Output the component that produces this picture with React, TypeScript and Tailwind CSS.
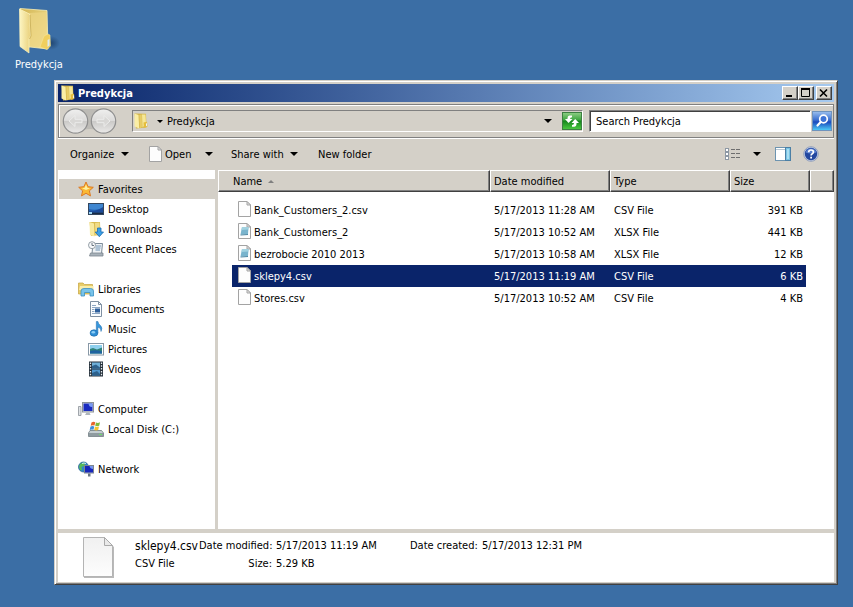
import type { ReactNode } from 'react';

type IconProps = { className?: string };

interface FileEntry {
  name: string;
  modified: string;
  type: string;
  size: string;
  kind: 'blank' | 'sheet';
}

interface NavItem {
  label: string;
  icon: (props: IconProps) => ReactNode;
}

interface NavGroup extends NavItem {
  active?: boolean;
  children: NavItem[];
}

const FILES: FileEntry[] = [
  { name: 'Bank_Customers_2.csv', modified: '5/17/2013 11:28 AM', type: 'CSV File', size: '391 KB', kind: 'blank' },
  { name: 'Bank_Customers_2', modified: '5/17/2013 10:52 AM', type: 'XLSX File', size: '441 KB', kind: 'sheet' },
  { name: 'bezrobocie 2010 2013', modified: '5/17/2013 10:58 AM', type: 'XLSX File', size: '12 KB', kind: 'sheet' },
  { name: 'sklepy4.csv', modified: '5/17/2013 11:19 AM', type: 'CSV File', size: '6 KB', kind: 'blank' },
  { name: 'Stores.csv', modified: '5/17/2013 10:52 AM', type: 'CSV File', size: '4 KB', kind: 'blank' },
];

const SELECTED = 'sklepy4.csv';

const NAV: NavGroup[] = [
  {
    label: 'Favorites',
    icon: StarIcon,
    active: true,
    children: [
      { label: 'Desktop', icon: DesktopIcon },
      { label: 'Downloads', icon: DownloadsIcon },
      { label: 'Recent Places', icon: RecentIcon },
    ],
  },
  {
    label: 'Libraries',
    icon: LibrariesIcon,
    children: [
      { label: 'Documents', icon: DocumentsIcon },
      { label: 'Music', icon: MusicIcon },
      { label: 'Pictures', icon: PicturesIcon },
      { label: 'Videos', icon: VideosIcon },
    ],
  },
  { label: 'Computer', icon: ComputerIcon, children: [{ label: 'Local Disk (C:)', icon: DiskIcon }] },
  { label: 'Network', icon: NetworkIcon, children: [] },
];

/* Icons */

function BigFolderIcon() {
  return (
    <svg viewBox="0 0 42 48" className="h-12 w-[42px]">
      <defs>
        <linearGradient id="bf-back" x1="0" y1="0" x2="1" y2="1">
          <stop offset="0" stopColor="#d2b452" />
          <stop offset="1" stopColor="#f8e9a0" />
        </linearGradient>
        <linearGradient id="bf-front" x1="0" y1="0" x2="1" y2="0">
          <stop offset="0" stopColor="#fdf6c4" />
          <stop offset="1" stopColor="#e9d07a" />
        </linearGradient>
        <radialGradient id="bf-shadow">
          <stop offset="0" stopColor="#16365c" stopOpacity="0.7" />
          <stop offset="1" stopColor="#16365c" stopOpacity="0" />
        </radialGradient>
      </defs>
      <ellipse cx="33" cy="35" rx="9" ry="7" fill="url(#bf-shadow)" />
      <path d="M2 0.500 L29 2.500 L30 41 L12 39 L5 40 Z" fill="url(#bf-back)" stroke="#f8eeb4" strokeWidth="0.8" />
      <path d="M11 5 L28 4 L28.500 40 L11.500 38 Z" fill="#ecd684" opacity="0.7" />
      <path d="M26 28 L30 26 L32 27 L32.500 38 L29 41.500 L22 39 Z" fill="#f0cf5e" stroke="#f9e89c" strokeWidth="0.5" />
      <path d="M29.500 32 L31.500 31 L31.500 37.500 L29.500 39 Z" fill="#dceaf0" />
      <path d="M1.500 1 L11.500 6 L12.500 28 L11 31 L11 45 L2 38.500 Z" fill="url(#bf-front)" stroke="#fbf3c0" strokeWidth="0.7" />
      <path d="M12 7 L13 28 L11.500 31" fill="none" stroke="#b99a3c" strokeWidth="0.6" />
    </svg>
  );
}

function FolderIcon({ className = 'size-4' }: IconProps) {
  return (
    <svg viewBox="0 0 16 16" className={className}>
      <path d="M1.500 0.500 L13 0.800 L13.500 14.500 L3 15.500 Z" fill="#d5b64a" />
      <path d="M1.500 0.500 L5.500 2 L6.200 15.500 L1.500 13.500 Z" fill="#faeea6" />
      <path d="M6.300 2 L8.800 1.500 L9 14 L6.800 15.500 Z" fill="#e7cc67" />
      <path d="M9 1.500 L12.500 1.500 L13 11 L9.500 14.500 Z" fill="#f6e796" />
      <path d="M10.500 9.500 L14 8.800 L14.500 13.500 L11 14.800 Z" fill="#e5bd3c" />
      <path d="M13 10.500 L14 10.200 V12.800 L13 13.200 Z" fill="#eef4f4" />
    </svg>
  );
}

function PageIcon({ className = 'size-4' }: IconProps) {
  return (
    <svg viewBox="0 0 16 16" className={className}>
      <path d="M0.500 0.500 H9 L12.500 4 V15.500 H0.500 Z" fill="#fdfdfd" stroke="#a3a3a3" />
      <path d="M9 0.500 V4 H12.500 Z" fill="#e3e3e3" stroke="#a3a3a3" />
    </svg>
  );
}

function SheetIcon({ className = 'size-4' }: IconProps) {
  return (
    <svg viewBox="0 0 16 16" className={className}>
      <path d="M0.500 0.500 H9 L12.500 4 V15.500 H0.500 Z" fill="#fdfdfd" stroke="#a3a3a3" />
      <path d="M9 0.500 V4 H12.500 Z" fill="#e3e3e3" stroke="#a3a3a3" />
      <path d="M4 4 L10.500 4 L10 11 L2.500 11.500 Z" fill="#79b4cd" />
      <path d="M4 4 L10.500 4 L10.300 6.500 L3.500 7 Z" fill="#a2d2e0" />
      <path d="M2.500 11.500 L10 11 L10 12 L2.500 12.500 Z" fill="#4a86a3" />
    </svg>
  );
}

function BigPageIcon() {
  return (
    <svg viewBox="0 0 34 42" className="h-[42px] w-[34px]">
      <defs>
        <linearGradient id="bp" x1="0" y1="0" x2="0" y2="1">
          <stop offset="0" stopColor="#f0f0f0" />
          <stop offset="1" stopColor="#fdfdfd" />
        </linearGradient>
      </defs>
      <path d="M2 2 H24 L32 10 V41 H2 Z" fill="#b9b9b9" />
      <path d="M1.500 0.500 H22.500 L30.500 8.500 V39.500 H1.500 Z" fill="url(#bp)" stroke="#b4b4b4" />
      <path d="M22.500 0.500 V8.500 H30.500 Z" fill="#e9e9e9" stroke="#a9a9a9" />
    </svg>
  );
}

function StarIcon({ className }: IconProps) {
  return (
    <svg viewBox="0 0 16 16" className={className}>
      <path
        d="M8 1 L10.100 5.700 L15.300 6.300 L11.400 9.800 L12.500 14.900 L8 12.300 L3.500 14.900 L4.600 9.800 L0.700 6.300 L5.900 5.700 Z"
        fill="#fbb934"
        stroke="#dd7a24"
        strokeLinejoin="round"
      />
      <path d="M8 3.500 L9.300 6.800 L12 7.200 L8 9 L4 7.200 L6.700 6.800 Z" fill="#fff0a0" />
    </svg>
  );
}

function DesktopIcon({ className }: IconProps) {
  return (
    <svg viewBox="0 0 16 16" className={className}>
      <rect x="0.500" y="2.500" width="15" height="11" fill="#2360b0" stroke="#33475f" />
      <path d="M1 3 H15 V7 Q8 10 1 8 Z" fill="#3f86d0" />
      <path d="M1 10 Q8 11 15 6 V11 H1 Z" fill="#1c4b9a" />
      <rect x="1" y="11.500" width="14" height="1.500" fill="#1a2a44" />
      <rect x="1" y="11" width="3" height="2" fill="#9fd7f5" />
    </svg>
  );
}

function DownloadsIcon({ className }: IconProps) {
  return (
    <svg viewBox="0 0 16 16" className={className}>
      <path d="M1.500 1 L12 1 L12.500 14 L3 15 Z" fill="#d9bb50" />
      <path d="M1.500 1 L6 2.500 L6.500 15.500 L2 14 Z" fill="#f8eaa0" />
      <path d="M7 2 L11.500 1.500 L12 12 L7.500 14 Z" fill="#f1dc86" />
      <path d="M9.500 7 H13 V11 H15.500 L11.300 15.700 L7.200 11 H9.500 Z" fill="#3ba0e6" stroke="#1d6cae" strokeWidth="0.800" />
    </svg>
  );
}

function RecentIcon({ className }: IconProps) {
  return (
    <svg viewBox="0 0 16 16" className={className}>
      <path d="M5 2.500 H14.500 L13.500 12.500 H4 Z" fill="#eef2f5" stroke="#7d8c99" />
      <path d="M8 5 H13 M7.500 7 H12.500 M7.500 9 H12" stroke="#6f93b5" />
      <path d="M2.500 12 H15 V15 H1.500 Z" fill="#a8b2ba" stroke="#7c868f" strokeWidth="0.800" />
      <circle cx="4" cy="4.200" r="3.500" fill="#f6f8fa" stroke="#8a949c" strokeWidth="0.900" />
      <path d="M4 2 V4.500 H6" stroke="#5d6a75" strokeWidth="0.900" fill="none" />
    </svg>
  );
}

function LibrariesIcon({ className }: IconProps) {
  return (
    <svg viewBox="0 0 16 16" className={className}>
      <path d="M0.500 2 H5 L6.500 3.500 H14.500 V13 H0.500 Z" fill="#e8cd68" stroke="#c4a23d" strokeWidth="0.700" />
      <path d="M2 5 H15.500 V9 H1 Z" fill="#f9edab" />
      <path d="M3 15 V10 Q3 7.500 6 7.500 H12.500 Q15.500 7.500 15.500 10 V15 H12 V11.500 H6.500 V15 Z" fill="#78c3ea" stroke="#3b8fc2" strokeWidth="0.800" />
    </svg>
  );
}

function DocumentsIcon({ className }: IconProps) {
  return (
    <svg viewBox="0 0 16 16" className={className}>
      <path d="M2.500 0.500 H10.500 L13.500 3.500 V15.500 H2.500 Z" fill="#fbfdff" stroke="#7f90a2" />
      <path d="M10.500 0.500 V3.500 H13.500" fill="none" stroke="#7f90a2" />
      <path d="M4 4.500 H8 M4 6.500 H12 M4 8.500 H6.500 M4 10.500 H6.500 M4 12.500 H12" stroke="#8ea8c4" />
      <rect x="7" y="7.500" width="5" height="4" fill="#2d5f9c" />
    </svg>
  );
}

function MusicIcon({ className }: IconProps) {
  return (
    <svg viewBox="0 0 16 16" className={className}>
      <ellipse cx="6" cy="12" rx="3.900" ry="3.200" fill="#2f8fd6" stroke="#1e6bab" strokeWidth="0.700" />
      <ellipse cx="5.300" cy="11.200" rx="1.800" ry="1.200" fill="#8ccdf5" />
      <path d="M8.300 0.500 H9.900 Q10.300 3 12.500 4.500 Q15 6.800 13 10.500 Q13.300 7 9.900 6 V12 H8.300 Z" fill="#3897dc" stroke="#1e6bab" strokeWidth="0.500" />
    </svg>
  );
}

function PicturesIcon({ className }: IconProps) {
  return (
    <svg viewBox="0 0 16 16" className={className}>
      <rect x="0.500" y="2.500" width="15" height="11.500" fill="#fff" stroke="#8898a6" />
      <rect x="2" y="4" width="12" height="8.500" fill="#8fd0ee" />
      <path d="M2 8 L5 7 L9 8.500 L14 6.500 V12.500 H2 Z" fill="#2f8178" />
      <path d="M2 10 Q8 8.500 14 10.500 V12.500 H2 Z" fill="#1f62a0" />
    </svg>
  );
}

function VideosIcon({ className }: IconProps) {
  return (
    <svg viewBox="0 0 16 16" className={className}>
      <rect x="1" y="0.500" width="14" height="15" fill="#26313b" />
      <rect x="4" y="1.500" width="8" height="6" fill="#6fb0d9" />
      <rect x="4" y="8.500" width="8" height="6" fill="#4f97cf" />
      <path d="M4 5 L8 3.500 L12 6.500 V7.500 H4 Z M4 12 L9 10 L12 13 V14.500 H4 Z" fill="#2d618c" />
      <path d="M2.500 1.500 V15 M13.500 1.500 V15" stroke="#e6edf2" strokeWidth="1.300" strokeDasharray="1.500 1.300" />
    </svg>
  );
}

function ComputerIcon({ className }: IconProps) {
  return (
    <svg viewBox="0 0 16 16" className={className}>
      <path d="M0.500 5.500 H3 V14.500 H0.500 Z" fill="#dfe2e5" stroke="#8b9298" strokeWidth="0.800" />
      <rect x="4.500" y="1.500" width="11" height="9.500" fill="#d5dade" stroke="#8b9298" />
      <rect x="5.500" y="2.500" width="9" height="7.500" fill="#1a2bc0" />
      <path d="M10.500 2.500 H14.500 V6 Q11 6.500 10.500 2.500 Z" fill="#7a9cf2" />
      <path d="M8.500 11.500 H11.500 L12.500 14 H7 Z" fill="#aeb5bb" />
    </svg>
  );
}

function DiskIcon({ className }: IconProps) {
  return (
    <svg viewBox="0 0 16 16" className={className}>
      <path d="M2 9.500 H13.500 L15.500 12 V15.500 H0.500 V12 Z" fill="#8f9ba0" stroke="#69757b" strokeWidth="0.700" />
      <path d="M2 10 H13.500 L15 12 H1 Z" fill="#c3cdd0" />
      <rect x="11" y="13" width="3" height="1" fill="#6fe06a" />
      <path d="M3.500 1.500 Q5.500 0.300 7.300 1.300 L6.500 4.600 Q4.500 3.900 2.700 4.800 Z" fill="#e8642c" />
      <path d="M8 1.500 Q10 2.400 12 1.300 L11.200 4.800 Q9.200 5.700 7.200 4.800 Z" fill="#7fba3a" />
      <path d="M2.500 5.500 Q4.400 4.500 6.300 5.400 L5.500 8.800 Q3.600 8 1.700 9 Z" fill="#3d8ddb" />
      <path d="M7 5.600 Q9 6.500 11 5.600 L10.200 9 Q8.200 9.900 6.200 9 Z" fill="#f5c331" />
    </svg>
  );
}

function NetworkIcon({ className }: IconProps) {
  return (
    <svg viewBox="0 0 16 16" className={className}>
      <circle cx="5.500" cy="6" r="5" fill="#2f86c9" stroke="#1d5a8e" strokeWidth="0.700" />
      <path d="M2 3 Q5 0.500 7.500 2 L6 5 L3.500 6 L4 9 L2.500 9.500 Q0 6 2 3 Z" fill="#58b957" />
      <path d="M4 2.500 Q6 1.500 8 2.500" stroke="#cdeefb" fill="none" />
      <rect x="6.500" y="4.500" width="9" height="7.500" fill="#cfd5da" stroke="#7d868e" />
      <rect x="7" y="5" width="8" height="6.500" fill="#1726bb" />
      <path d="M11.500 5 H15 V8 Q12 8 11.500 5 Z" fill="#7595ee" />
      <path d="M10 12.500 H12.500 V15.500 H10 Z" fill="#6b7685" />
    </svg>
  );
}

function RefreshIcon() {
  return (
    <svg viewBox="0 0 20 18" className="h-[18px] w-5">
      <defs>
        <linearGradient id="rf" x1="0" y1="0" x2="0" y2="1">
          <stop offset="0" stopColor="#8fce86" />
          <stop offset="0.450" stopColor="#3aa53d" />
          <stop offset="0.500" stopColor="#16861d" />
          <stop offset="1" stopColor="#4ccb41" />
        </linearGradient>
      </defs>
      <rect x="0.500" y="0.500" width="19" height="17" fill="url(#rf)" stroke="#3c7f42" />
      <path d="M10 3.500 H7.500 Q5.500 3.700 5.500 6 V7 H3 L6.500 11 L10.500 7 H8 Q8 5.500 10 5.300 Z" fill="#fff" />
      <path d="M10 14.800 H12.500 Q14.500 14.600 14.500 12.300 V11 H17 L13.200 7 L9.500 11 H12 Q12 12.800 10 13 Z" fill="#fff" />
    </svg>
  );
}

function SearchIcon() {
  return (
    <svg viewBox="0 0 20 20" className="size-5">
      <defs>
        <linearGradient id="sr" x1="0" y1="0" x2="0" y2="1">
          <stop offset="0" stopColor="#9cc0ee" />
          <stop offset="0.450" stopColor="#3a6fd0" />
          <stop offset="0.550" stopColor="#1a49bd" />
          <stop offset="1" stopColor="#4fd0f8" />
        </linearGradient>
      </defs>
      <rect x="0.500" y="0.500" width="19" height="19" fill="url(#sr)" stroke="#6f93bd" />
      <circle cx="11.500" cy="8" r="3.800" fill="#3f74d6" stroke="#fff" strokeWidth="1.700" />
      <path d="M8.700 11 L5.500 14.500" stroke="#fff" strokeWidth="2.200" strokeLinecap="round" />
    </svg>
  );
}

function NavArrows() {
  return (
    <svg viewBox="0 0 56 28" className="h-7 w-14">
      <defs>
        <linearGradient id="na" x1="0" y1="0" x2="0" y2="1">
          <stop offset="0" stopColor="#f0f0ef" />
          <stop offset="0.480" stopColor="#dcdbda" />
          <stop offset="0.520" stopColor="#cbcac8" />
          <stop offset="1" stopColor="#ebeae9" />
        </linearGradient>
      </defs>
      <path d="M14 2 H42 V26 Q28 18 14 26 Z" fill="#bdbbb6" />
      {[13.5, 41.5].map((cx) => (
        <circle key={cx} cx={cx} cy="14" r="12.200" fill="url(#na)" stroke="#8f8f8f" strokeWidth="1.200" />
      ))}
      <path d="M7 14 L13 8.500 V12.300 H20 V15.700 H13 V19.500 Z" fill="#d8d7d5" stroke="#ececeb" />
      <path d="M48 14 L42 8.500 V12.300 H35 V15.700 H42 V19.500 Z" fill="#d8d7d5" stroke="#ececeb" />
    </svg>
  );
}

function ViewIcon() {
  return (
    <svg viewBox="0 0 16 14" className="h-3.5 w-4" shapeRendering="crispEdges">
      {[1, 5, 9].map((y) => (
        <g key={y}>
          <rect x="0.500" y={y + 0.5} width="3" height="3" fill="#fff" stroke="#8d98a4" />
          <path d={`M6 ${y + 1.5} H10 M11 ${y + 1.5} H15`} stroke="#6e6e6e" />
        </g>
      ))}
    </svg>
  );
}

function PaneIcon() {
  return (
    <svg viewBox="0 0 16 14" className="h-3.5 w-4">
      <rect x="0.500" y="0.500" width="15" height="13" fill="#fff" stroke="#6d94b0" />
      <path d="M1 2.500 H10.500" stroke="#b9c8d3" />
      <rect x="10.500" y="0.500" width="5" height="13" fill="#79c4e4" stroke="#4b7fa5" />
      <rect x="12" y="2" width="2" height="10" fill="#a9def2" />
    </svg>
  );
}

function HelpIcon() {
  return (
    <svg viewBox="0 0 16 16" className="size-4">
      <circle cx="8" cy="8" r="7.300" fill="#c8d2e6" stroke="#8494b5" strokeWidth="0.800" />
      <circle cx="8" cy="8" r="6.200" fill="#23479f" />
      <path d="M2.500 6.500 A5.800 5.800 0 0 1 13.500 6.500 Q8 8.500 2.500 6.500 Z" fill="#5a80cf" />
      <path d="M5.700 6.200 Q5.700 4 8 4 Q10.400 4 10.400 6 Q10.400 7.200 9 8 Q8.100 8.500 8.100 9.600" fill="none" stroke="#fff" strokeWidth="1.700" />
      <rect x="7.200" y="10.700" width="1.800" height="1.800" fill="#fff" />
    </svg>
  );
}

function Caret({ className = 'h-1 w-2' }: IconProps) {
  return (
    <svg viewBox="0 0 8 4" className={className}>
      <path d="M0 0 H8 L4 4 Z" fill="currentColor" />
    </svg>
  );
}

/* Window parts */

function CaptionButton({ label, children }: { label: string; children: ReactNode }) {
  return (
    <button
      aria-label={label}
      className="flex h-3.5 w-4 items-center justify-center border border-t-white border-r-[#404040] border-b-[#404040] border-l-white bg-[#d4d0c8] shadow-[inset_-1px_-1px_0_#808080]"
    >
      <svg viewBox="0 0 12 10" className="h-2.5 w-3" fill="none" stroke="#000">
        {children}
      </svg>
    </button>
  );
}

function TitleBar() {
  return (
    <header className="flex h-[18px] items-center bg-linear-to-r from-[#0a246a] to-[#a6caf0] px-0.5">
      <FolderIcon />
      <h1 className="ml-0.5 font-bold text-white">Predykcja</h1>
      <div className="ml-auto flex">
        <CaptionButton label="Minimize">
          <path d="M2 8 H8" strokeWidth="2" />
        </CaptionButton>
        <CaptionButton label="Maximize">
          <path d="M1.500 1 V8.500 H9.500 V1" />
          <path d="M1 1 H10" strokeWidth="2" />
        </CaptionButton>
        <div className="ml-0.5 flex">
          <CaptionButton label="Close">
            <path d="M2 1.500 L9 8.500 M9 1.500 L2 8.500" strokeWidth="1.600" />
          </CaptionButton>
        </div>
      </div>
    </header>
  );
}

function AddressBar() {
  return (
    <div className="mt-0.5 flex h-[34px] items-center border border-[#808080] pr-px pl-[3px] shadow-[inset_1px_1px_0_#fff,0_1px_0_#fff]">
      <NavArrows />
      <div className="ml-3.5 flex h-[22px] flex-1 items-center border border-t-[#808080] border-r-white border-b-white border-l-[#808080]">
        <FolderIcon />
        <button className="ml-2 flex items-center gap-1">
          <Caret className="h-[3px] w-1.5" />
          Predykcja
        </button>
        <button aria-label="Previous locations" className="ml-auto px-1">
          <Caret />
        </button>
        <button aria-label="Refresh" className="ml-1.5">
          <RefreshIcon />
        </button>
      </div>
      <div className="ml-1.5 h-[22px] w-[222px] border border-t-[#808080] border-r-white border-b-white border-l-[#808080] bg-white shadow-[inset_1px_1px_0_#404040]">
        <input
          type="text"
          aria-label="Search"
          placeholder="Search Predykcja"
          className="h-5 w-full bg-transparent px-1.5 outline-none placeholder:text-black"
        />
      </div>
      <button aria-label="Search" className="ml-px">
        <SearchIcon />
      </button>
    </div>
  );
}

function Toolbar() {
  return (
    <div className="flex h-8 items-center pr-[15px] pl-3">
      <button className="flex items-center">
        <span className="w-[51px] text-left">Organize</span>
        <Caret />
      </button>
      <button className="ml-5 flex items-center">
        <PageIcon />
        <span className="w-10 text-left">Open</span>
        <Caret />
      </button>
      <button className="ml-[18px] flex items-center">
        <span className="w-[59px] text-left">Share with</span>
        <Caret />
      </button>
      <button className="ml-5">New folder</button>
      <div className="ml-auto flex items-center gap-3">
        <button className="flex items-center gap-3" aria-label="Change your view">
          <ViewIcon />
          <Caret />
        </button>
        <button aria-label="Preview pane" className="ml-0.5">
          <PaneIcon />
        </button>
        <button aria-label="Help">
          <HelpIcon />
        </button>
      </div>
    </div>
  );
}

function Sidebar() {
  return (
    <nav className="w-[157px] shrink-0 bg-white pt-[9px] pl-px">
      {NAV.map((group) => (
        <section key={group.label} className="mb-5">
          <a href="#" className={`flex h-5 items-center gap-1 pl-[19px] ${group.active ? 'bg-[#d4d0c8]' : ''}`}>
            <group.icon className="size-4" />
            {group.label}
          </a>
          {group.children.map((item) => (
            <a key={item.label} href="#" className="flex h-5 items-center gap-1 pl-[29px]">
              <item.icon className="size-4" />
              {item.label}
            </a>
          ))}
        </section>
      ))}
    </nav>
  );
}

function HeaderCell({ children, first }: { children?: ReactNode; first?: boolean }) {
  return (
    <th
      className={`h-[22px] border border-t-white border-r-[#404040] border-b-[#404040] border-l-white bg-[#d4d0c8] text-left font-normal shadow-[inset_-1px_-1px_0_#808080] ${first ? 'pl-3.5' : 'pl-[3px]'}`}
    >
      {children}
    </th>
  );
}

function FileTable() {
  return (
    <main className="flex-1 overflow-hidden bg-white">
      <table className="w-full table-fixed border-separate border-spacing-0">
        <colgroup>
          <col className="w-[272px]" />
          <col className="w-[120px]" />
          <col className="w-[120px]" />
          <col className="w-20" />
          <col />
        </colgroup>
        <thead>
          <tr>
            <HeaderCell first>
              <span className="flex items-center gap-1.5">
                Name
                <Caret className="h-[3px] w-1.5 rotate-180 text-[#808080]" />
              </span>
            </HeaderCell>
            <HeaderCell>Date modified</HeaderCell>
            <HeaderCell>Type</HeaderCell>
            <HeaderCell>Size</HeaderCell>
            <HeaderCell />
          </tr>
        </thead>
        <tbody className="before:block before:h-[7px]">
          {FILES.map((file) => {
            const Icon = file.kind === 'sheet' ? SheetIcon : PageIcon;
            const fill = file.name === SELECTED ? 'bg-[#0a246a] text-white' : '';
            return (
              <tr key={file.name} aria-selected={file.name === SELECTED}>
                <td className="pl-3.5">
                  <div className={`flex h-[22px] items-center pl-1.5 ${fill}`}>
                    <Icon className="mb-0.5 size-4" />
                    <span>{file.name}</span>
                  </div>
                </td>
                <td>
                  <div className={`flex h-[22px] items-center pl-1 ${fill}`}>{file.modified}</div>
                </td>
                <td>
                  <div className={`flex h-[22px] items-center pl-1 ${fill}`}>{file.type}</div>
                </td>
                <td className="pr-1">
                  <div className={`flex h-[22px] items-center justify-end pr-[3px] ${fill}`}>{file.size}</div>
                </td>
                <td />
              </tr>
            );
          })}
        </tbody>
      </table>
    </main>
  );
}

function DetailsPane() {
  return (
    <footer className="mt-1 flex h-[49px] bg-white pt-1 pl-6">
      <BigPageIcon />
      <dl className="ml-[19px] grid grid-cols-[64px_73px_138px_72px_auto] content-start leading-[18px]">
        <dt className="text-xs leading-[18px]">sklepy4.csv</dt>
        <dt className="text-right">Date modified:</dt>
        <dd className="pl-1">5/17/2013 11:19 AM</dd>
        <dt>Date created:</dt>
        <dd>5/17/2013 12:31 PM</dd>
        <dt>CSV File</dt>
        <dt className="text-right">Size:</dt>
        <dd className="pl-1">5.29 KB</dd>
      </dl>
    </footer>
  );
}

export default function App() {
  return (
    <div className="flex h-screen flex-col bg-[#3b6ea5] font-['DejaVu_Sans_Condensed','Noto_Sans',sans-serif] text-[11px] leading-[17px] whitespace-nowrap text-black">
      <button className="flex h-20 w-[78px] shrink-0 flex-col items-center pt-2 text-white">
        <BigFolderIcon />
        Predykcja
      </button>
      <div className="mr-[15px] mb-[22px] ml-[54px] flex min-h-0 flex-1 flex-col border border-t-[#d4d0c8] border-r-[#404040] border-b-[#404040] border-l-[#d4d0c8] bg-[#d4d0c8] px-[3px] pt-[3px] pb-0.5 shadow-[inset_1px_1px_0_#fff,inset_-1px_-1px_0_#808080]">
        <TitleBar />
        <AddressBar />
        <Toolbar />
        <div className="flex min-h-0 flex-1 gap-[3px]">
          <Sidebar />
          <FileTable />
        </div>
        <DetailsPane />
      </div>
    </div>
  );
}
